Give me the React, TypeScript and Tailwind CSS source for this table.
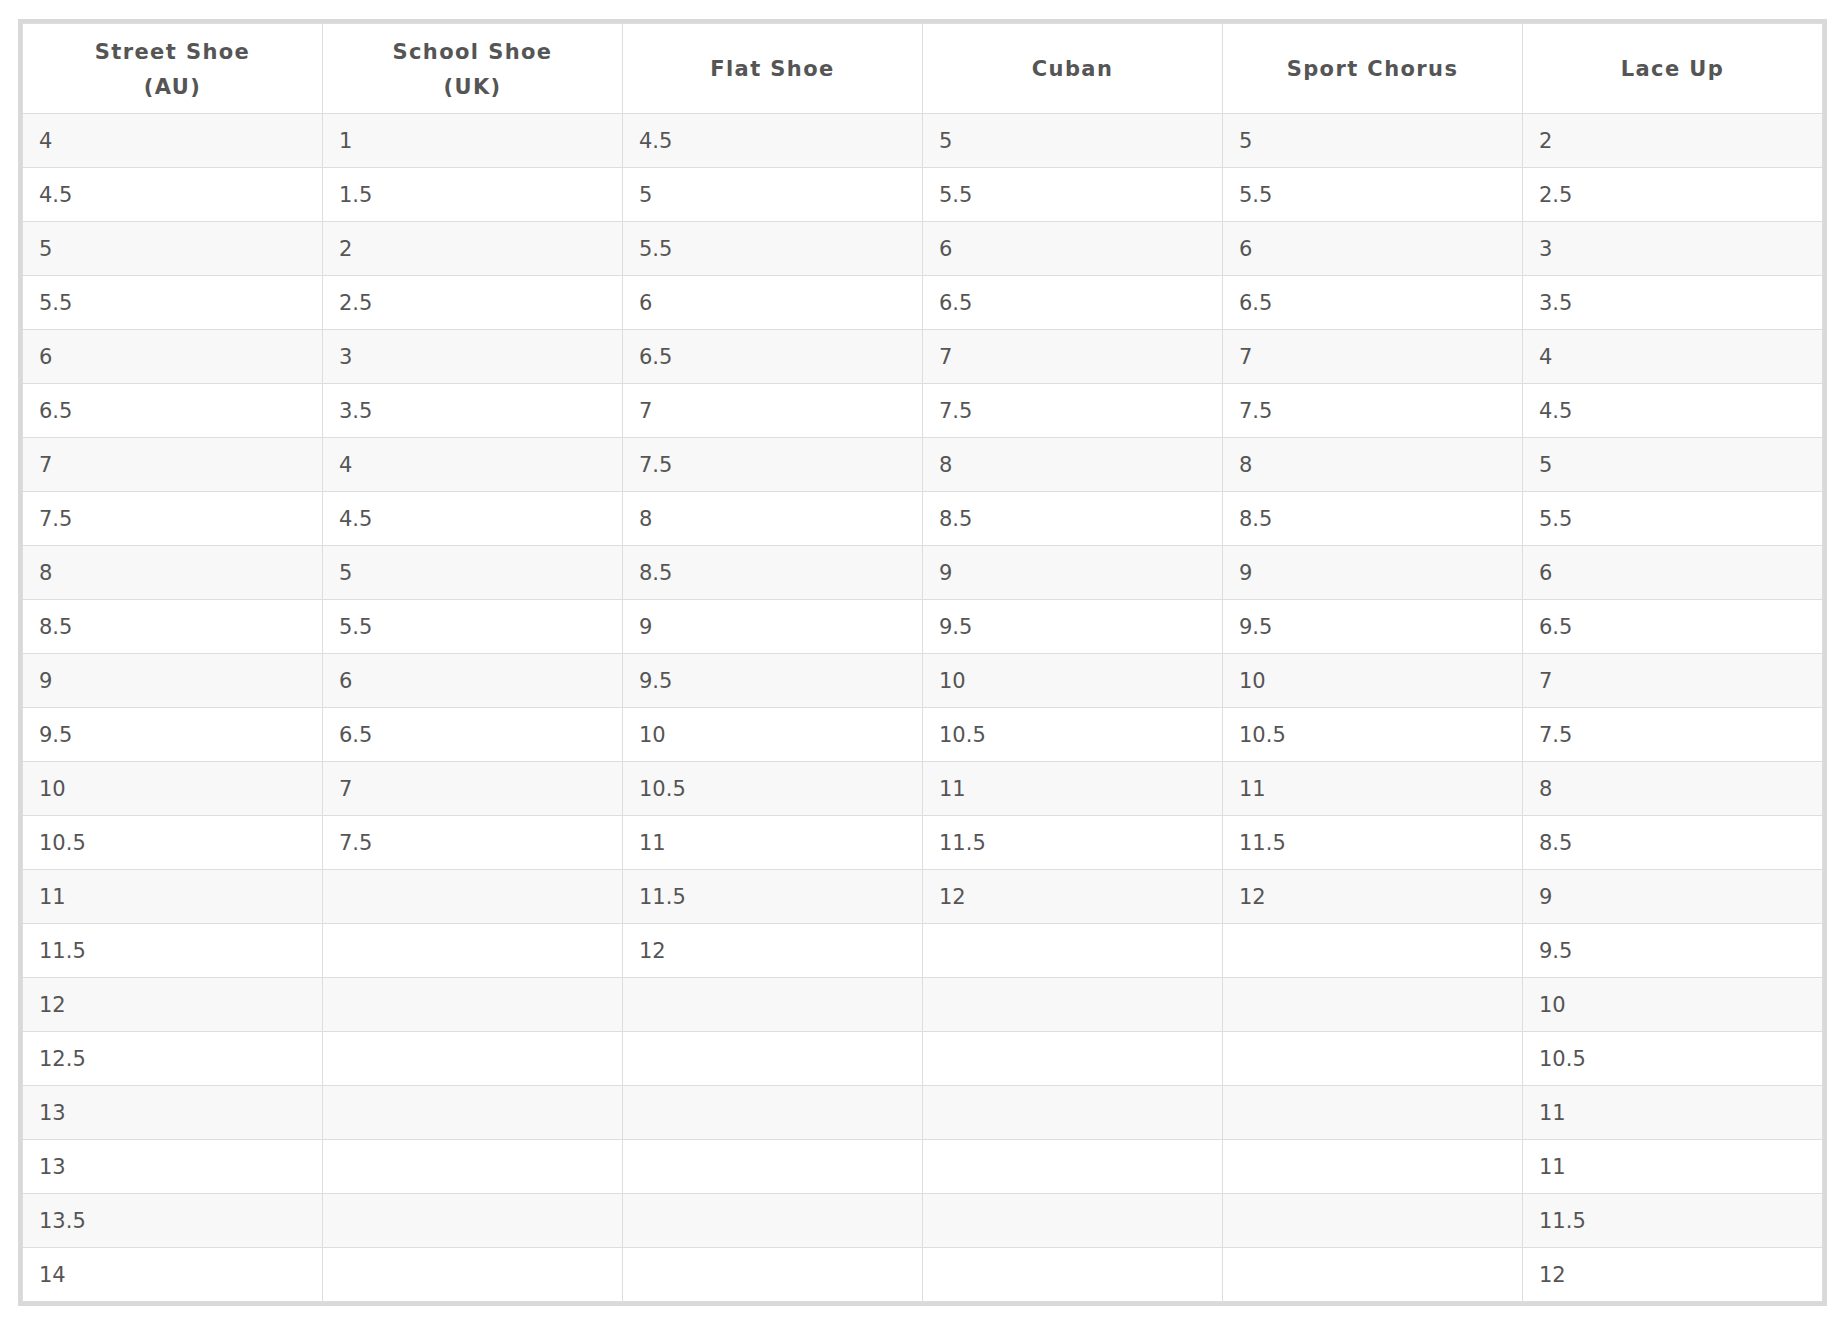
const headers: React.ReactNode[] = [
  <>Street Shoe<br />(AU)</>,
  <>School Shoe<br />(UK)</>,
  "Flat Shoe",
  "Cuban",
  "Sport Chorus",
  "Lace Up",
];

const range = (from: number, to: number) => {
  const out: string[] = [];
  for (let v = from; v <= to; v += 0.5) out.push(String(v));
  return out;
};

const columns: string[][] = [
  [...range(4, 13), "13", "13.5", "14"],
  range(1, 7.5),
  range(4.5, 12),
  range(5, 12),
  range(5, 12),
  [...range(2, 11), "11", "11.5", "12"],
];

const rowCount = columns[0].length;

export default function App() {
  return (
    <div className="min-h-[1320px] bg-white pt-[19px] pl-[18px]" style={{ fontFamily: '"DejaVu Sans", "Open Sans", sans-serif' }}>
      <div className="w-[1809px] border-4 border-[#d9d9d9]">
        <table className="w-full table-fixed border-collapse text-[#555]">
          <thead>
            <tr>
              {headers.map((h, i) => (
                <th
                  key={i}
                  className="h-[90px] border border-[#dddddd] px-4 pt-[2px] text-center align-middle text-[21px] font-bold leading-[35px] tracking-[1.4px] text-[#555]"
                >
                  {h}
                </th>
              ))}
            </tr>
          </thead>
          <tbody>
            {Array.from({ length: rowCount }).map((_, r) => (
              <tr key={r} className={r % 2 === 0 ? "bg-[#f8f8f8]" : "bg-white"}>
                {columns.map((col, c) => (
                  <td
                    key={c}
                    className="h-[54px] border border-[#dddddd] pl-4 pt-[2px] align-middle text-[21px] text-[#555]"
                  >
                    {col[r] ?? ""}
                  </td>
                ))}
              </tr>
            ))}
          </tbody>
        </table>
      </div>
    </div>
  );
}
